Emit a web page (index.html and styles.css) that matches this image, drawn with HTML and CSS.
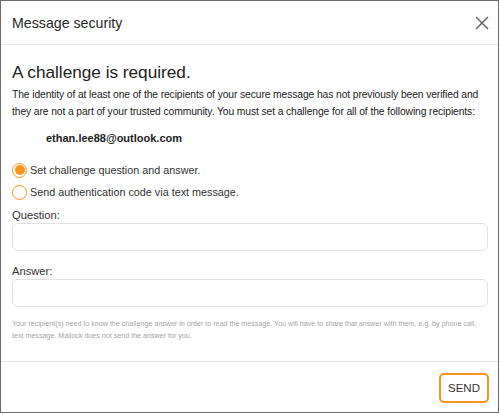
FILE: index.html
```html
<!DOCTYPE html>
<html lang="en">
<head>
<meta charset="utf-8">
<title>Message security</title>
<link rel="stylesheet" href="styles.css">
</head>
<body>
<div class="dialog">
  <header class="dlg-header">
    <h1 class="dlg-title">Message security</h1>
    <button class="close" aria-label="Close">
      <svg width="14" height="14" viewBox="0 0 14 14"><path d="M1 1L13 13M13 1L1 13" stroke="#666" stroke-width="1.5" fill="none"/></svg>
    </button>
  </header>
  <main class="dlg-body">
    <h2 class="heading">A challenge is required.</h2>
    <p class="intro">The identity of at least one of the recipients of your secure message has not previously been verified and they are not a part of your trusted community. You must set a challenge for all of the following recipients:</p>
    <div class="recipient">ethan.lee88@outlook.com</div>
    <div class="options">
      <label class="option"><span class="radio checked"></span>Set challenge question and answer.</label>
      <label class="option"><span class="radio"></span>Send authentication code via text message.</label>
    </div>
    <div class="field">
      <div class="label">Question:</div>
      <div class="input"></div>
    </div>
    <div class="field">
      <div class="label">Answer:</div>
      <div class="input"></div>
    </div>
    <p class="note">Your recipient(s) need to know the challenge answer in order to read the message. You will have to share that answer with them, e.g. by phone call, text message. Mailock does not send the answer for you.</p>
  </main>
  <footer class="dlg-footer">
    <button class="send">SEND</button>
  </footer>
</div>
</body>
</html>
```
FILE: styles.css
```css
* { box-sizing: border-box; }
html, body { margin: 0; padding: 0; background: #fff; }
body {
  font-family: "Liberation Sans", Arial, sans-serif;
  color: #222;
}
.dialog {
  width: 499px;
  height: 413px;
  border: 1px solid #6b6b6b;
  display: flex;
  flex-direction: column;
  background: #fff;
  overflow: hidden;
}
.dlg-header {
  height: 44px;
  flex: none;
  display: flex;
  align-items: center;
  justify-content: space-between;
  padding: 0 9px 0 11px;
  border-bottom: 1px solid #e6e6e6;
}
.dlg-title {
  margin: 0;
  font-size: 14.2px;
  font-weight: normal;
  color: #2a2a2a;
  padding-top: 1px;
}
.close {
  border: 0;
  background: none;
  padding: 0;
  width: 14px;
  height: 14px;
  display: flex;
}
.dlg-body {
  flex: 1;
  min-height: 0;
  padding: 17px 10px 0 11px;
}
.heading {
  margin: 0;
  font-size: 17.2px;
  font-weight: normal;
  line-height: 20px;
  color: #222;
}
.intro {
  margin: 4px 0 0;
  font-size: 10.3px;
  letter-spacing: -0.1px;
  line-height: 17px;
  color: #222;
}
.recipient {
  margin: 10px 0 0 34px;
  font-size: 11px;
  font-weight: bold;
  line-height: 16px;
  color: #222;
}
.options {
  margin-top: 16px;
  display: flex;
  flex-direction: column;
  gap: 6px;
}
.option {
  display: flex;
  align-items: center;
  gap: 3px;
  font-size: 10.8px;
  line-height: 16px;
  color: #333;
}
.radio {
  width: 15px;
  height: 15px;
  border-radius: 50%;
  border: 1.5px solid #f7941d;
  flex: none;
  display: flex;
  align-items: center;
  justify-content: center;
}
.radio.checked::after {
  content: "";
  width: 10px;
  height: 10px;
  border-radius: 50%;
  background: #f7941d;
}
.field { margin-top: 8px; }
.field + .field { margin-top: 13px; }
.label {
  font-size: 11.2px;
  line-height: 14px;
  color: #333;
}
.input {
  margin-top: 1px;
  height: 28px;
  border: 1px solid #e0e0e0;
  border-radius: 6px;
  background: #fff;
}
.note {
  margin: 11px 0 0;
  font-size: 7.2px;
  letter-spacing: -0.03px;
  line-height: 12px;
  color: #a5a5a5;
}
.dlg-footer {
  height: 51px;
  flex: none;
  border-top: 1px solid #e6e6e6;
  display: flex;
  align-items: center;
  justify-content: flex-end;
  padding: 0 9px 0 0;
}
.send {
  width: 50px;
  height: 30px;
  border: 2px solid #f7941d;
  border-radius: 5px;
  background: #fff;
  font-family: "Liberation Sans", Arial, sans-serif;
  font-size: 11.5px;
  color: #333;
  padding: 0;
  margin-top: 1px;
}
```
